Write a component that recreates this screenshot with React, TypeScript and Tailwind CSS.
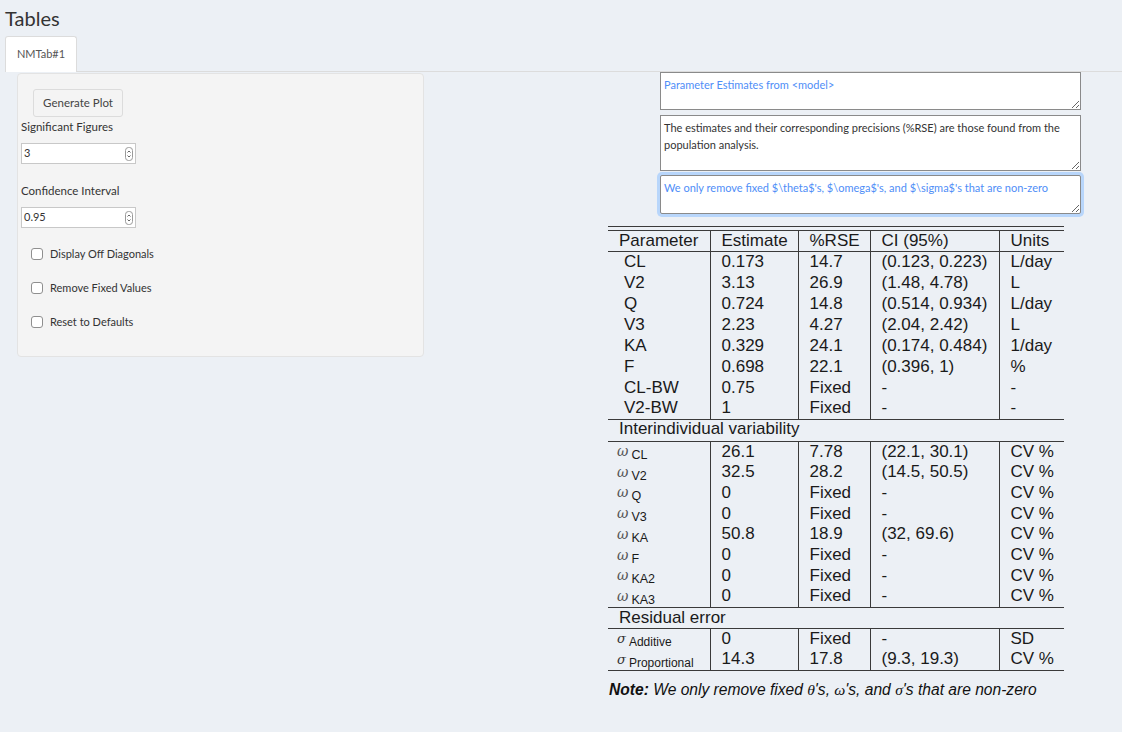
import React from "react";

const ui = "font-['Lato',sans-serif]";
const tex = "font-['Liberation_Sans',Arial,sans-serif]";

const fixedRows = [
  ["CL", "0.173", "14.7", "(0.123, 0.223)", "L/day"],
  ["V2", "3.13", "26.9", "(1.48, 4.78)", "L"],
  ["Q", "0.724", "14.8", "(0.514, 0.934)", "L/day"],
  ["V3", "2.23", "4.27", "(2.04, 2.42)", "L"],
  ["KA", "0.329", "24.1", "(0.174, 0.484)", "1/day"],
  ["F", "0.698", "22.1", "(0.396, 1)", "%"],
  ["CL-BW", "0.75", "Fixed", "-", "-"],
  ["V2-BW", "1", "Fixed", "-", "-"],
];

const omegaRows = [
  ["CL", "26.1", "7.78", "(22.1, 30.1)", "CV %"],
  ["V2", "32.5", "28.2", "(14.5, 50.5)", "CV %"],
  ["Q", "0", "Fixed", "-", "CV %"],
  ["V3", "0", "Fixed", "-", "CV %"],
  ["KA", "50.8", "18.9", "(32, 69.6)", "CV %"],
  ["F", "0", "Fixed", "-", "CV %"],
  ["KA2", "0", "Fixed", "-", "CV %"],
  ["KA3", "0", "Fixed", "-", "CV %"],
];

const sigmaRows = [
  ["Additive", "0", "Fixed", "-", "SD"],
  ["Proportional", "14.3", "17.8", "(9.3, 19.3)", "CV %"],
];

const Spinner = () => (
  <svg width="8" height="14" viewBox="0 0 8 14" className="shrink-0">
    <rect x="0.5" y="0.5" width="7" height="13" rx="3" fill="#fff" stroke="#9a9a9a" />
    <path d="M2.5 5.5 L4 4 L5.5 5.5" fill="none" stroke="#555" strokeWidth="0.9" />
    <path d="M2.5 8.5 L4 10 L5.5 8.5" fill="none" stroke="#555" strokeWidth="0.9" />
  </svg>
);

const NumberBox = ({ value }: { value: string }) => (
  <div className="w-[115px] h-[21px] bg-white border border-[#c8c8c8] flex items-center justify-between pl-[2px] pr-[2px] text-[11px] text-[#333]">
    <span>{value}</span>
    <Spinner />
  </div>
);

const Check = ({ label }: { label: string }) => (
  <label className="flex items-center h-[20px] ml-[10px]">
    <input
      type="checkbox"
      className="appearance-none w-[12px] h-[12px] border border-[#8f8f8f] rounded-[3px] bg-white"
    />
    <span className="ml-[7px] text-[11px] text-[#333]">{label}</span>
  </label>
);

const cell = "pl-[11px] border-l border-[#3a3a3a] text-left font-normal";
const greek = "font-['DejaVu_Serif',serif] italic";
const area = "block w-[421px] bg-white border border-[#8a8a8a] pl-[3px] pr-0 py-[3px] text-[11px] leading-[17px] outline-none overflow-hidden";

const App: React.FC = () => {
  return (
    <div className={`min-h-screen bg-[#ecf0f5] text-[#333] ${ui}`}>
      <h3 className="pl-[5px] pt-[5px] text-[20px] leading-[26px] text-[#333]">Tables</h3>

      <div className="mt-[5px] ml-[5px] flex border-b border-[#dcdcdc]">
        <div className="-mb-px h-[36px] w-[72px] bg-white border border-b-0 border-[#dcdcdc] rounded-t-[3px] flex items-center justify-center text-[11px] text-[#555]">
          NMTab#1
        </div>
      </div>

      <div className="flex">
        {/* sidebar */}
        <div className="ml-[17px] w-[407px] h-[284px] mt-px bg-[#f4f4f4] border border-[#e3e3e3] rounded-[4px] pl-[3px] pt-[15px]">
          <button className="ml-[12px] w-[90px] h-[28px] bg-[#f4f4f4] border border-[#dcdcdc] rounded-[3px] text-[11.5px] text-[#444]">
            Generate Plot
          </button>
          <div className="mt-[2px] text-[11.5px] leading-[16px]">Significant Figures</div>
          <div className="mt-[8px]">
            <NumberBox value="3" />
          </div>
          <div className="mt-[19px] text-[11.5px] leading-[16px]">Confidence Interval</div>
          <div className="mt-[8px]">
            <NumberBox value="0.95" />
          </div>
          <div className="mt-[16px] flex flex-col gap-[14px]">
            <Check label="Display Off Diagonals" />
            <Check label="Remove Fixed Values" />
            <Check label="Reset to Defaults" />
          </div>
        </div>

        {/* main */}
        <div className="ml-[184px] w-[474px]">
          <div className="ml-[52px] flex flex-col">
            <textarea
              className={`${area} h-[38px] text-[#4f8ef7]`}
              defaultValue="Parameter Estimates from <model>"
            />
            <textarea
              className={`${area} mt-[5px] h-[56px] text-[#333]`}
              defaultValue="The estimates and their corresponding precisions (%RSE) are those found from the population analysis."
            />
            <textarea
              className={`${area} mt-[4px] h-[39px] text-[#4f8ef7] rounded-[2px] shadow-[0_0_0_3px_#b8d6fb]`}
              defaultValue="We only remove fixed $\theta$'s, $\omega$'s, and $\sigma$'s that are non-zero"
            />
          </div>

          {/* estimates table */}
          <div className={`mt-[12px] w-[456px] text-[17px] text-[#1a1a1a] ${tex}`}>
            <div className="h-[5px] border-t border-b border-[#3a3a3a]" />
            <table className="w-[456px] border-collapse table-fixed">
              <colgroup>
                <col className="w-[102px]" />
                <col className="w-[88px]" />
                <col className="w-[72px]" />
                <col className="w-[129px]" />
                <col className="w-[65px]" />
              </colgroup>
              <thead>
                <tr className="h-[20px] leading-[18px] border-b border-[#3a3a3a]">
                  <th className="pl-[11px] text-left font-normal">Parameter</th>
                  <th className={cell}>Estimate</th>
                  <th className={cell}>%RSE</th>
                  <th className={cell}>CI (95%)</th>
                  <th className={cell}>Units</th>
                </tr>
              </thead>
              <tbody>
                {fixedRows.map((r, i) => (
                  <tr key={r[0]} className={`h-[21px] leading-[18px] ${i === fixedRows.length - 1 ? "border-b border-[#3a3a3a]" : ""}`}>
                    <td className="pl-[16px]">{r[0]}</td>
                    <td className={cell}>{r[1]}</td>
                    <td className={cell}>{r[2]}</td>
                    <td className={cell}>{r[3]}</td>
                    <td className={cell}>{r[4]}</td>
                  </tr>
                ))}
                <tr className="h-[21px] leading-[18px] border-b border-[#3a3a3a]">
                  <td colSpan={5} className="pl-[11px] pb-[3px]">Interindividual variability</td>
                </tr>
                {omegaRows.map((r, i) => (
                  <tr key={r[0]} className={`h-[20.75px] leading-[18px] ${i === omegaRows.length - 1 ? "border-b border-[#3a3a3a]" : ""}`}>
                    <td className="pl-[9px] whitespace-nowrap">
                      <span className={`${greek} text-[14px] text-[#555]`}>ω</span>
                      <span className="relative top-[3px] ml-[3px] text-[12.5px]">{r[0]}</span>
                    </td>
                    <td className={cell}>{r[1]}</td>
                    <td className={cell}>{r[2]}</td>
                    <td className={cell}>{r[3]}</td>
                    <td className={cell}>{r[4]}</td>
                  </tr>
                ))}
                <tr className="h-[21px] leading-[18px] border-b border-[#3a3a3a]">
                  <td colSpan={5} className="pl-[11px]">Residual error</td>
                </tr>
                {sigmaRows.map((r, i) => (
                  <tr key={r[0]} className={`h-[21px] leading-[18px] ${i === sigmaRows.length - 1 ? "border-b border-[#3a3a3a]" : ""}`}>
                    <td className="pl-[9px] whitespace-nowrap">
                      <span className={`${greek} text-[13px] text-[#333]`}>σ</span>
                      <span className="relative top-[3px] ml-[3px] text-[12px]">{r[0]}</span>
                    </td>
                    <td className={cell}>{r[1]}</td>
                    <td className={cell}>{r[2]}</td>
                    <td className={cell}>{r[3]}</td>
                    <td className={cell}>{r[4]}</td>
                  </tr>
                ))}
              </tbody>
            </table>
            <p className="mt-[7px] pl-px text-[15.6px] italic text-[#111]">
              <span className="font-bold">Note:</span> We only remove fixed{" "}
              <span className="font-['Liberation_Serif',serif]">θ</span>'s,{" "}
              <span className="font-['Liberation_Serif',serif]">ω</span>'s, and{" "}
              <span className="font-['Liberation_Serif',serif]">σ</span>'s that are non-zero
            </p>
          </div>
        </div>
      </div>
    </div>
  );
};

export default App;
